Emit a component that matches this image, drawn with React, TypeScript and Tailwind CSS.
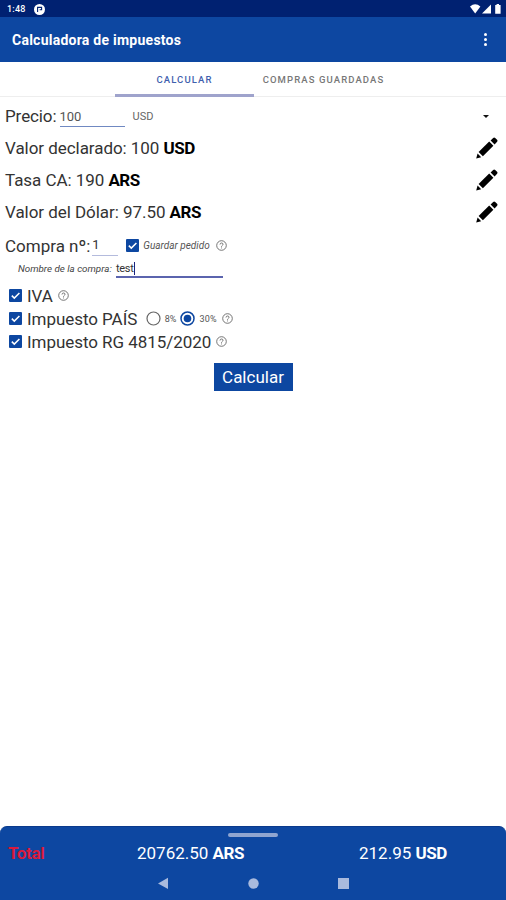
import type { ReactNode } from 'react';

const PencilIcon = () => (
  <svg className="w-[22px] h-[22px] shrink-0 mb-px" viewBox="0 0 22 22" fill="#000">
    <path d="M0.2 21.6 L1.6 16.6 L5.2 20.2 Z" />
    <path d="M2.6 15 L13.2 4.6 L17.4 8.8 L6.9 19.3 Z" />
    <path d="M14.6 3.4 L17.2 0.9 Q18.2 0 19.2 0.9 L21.1 2.8 Q22 3.8 21.1 4.8 L18.6 7.4 Z" />
  </svg>
);

const HelpIcon = ({ className = '' }: { className?: string }) => (
  <svg
    className={`w-[11px] h-[11px] shrink-0 ${className}`}
    viewBox="0 0 11 11"
    fill="none"
    stroke="#666"
    strokeWidth="0.9"
  >
    <circle cx="5.5" cy="5.5" r="4.8" />
    <path d="M4 4.5 Q4.1 3 5.5 3 Q7 3 7 4.3 Q7 5 6.2 5.5 Q5.5 5.9 5.5 6.7 M5.5 7.5 V8.4" />
  </svg>
);

const CheckIcon = () => (
  <svg className="w-[13px] h-[13px] shrink-0" viewBox="0 0 13 13">
    <rect width="13" height="13" rx="1" fill="#0d47a1" />
    <path d="M2.8 6.6 L5.3 9.1 L10.4 4" fill="none" stroke="#fff" strokeWidth="1.5" />
  </svg>
);

const Radio = ({ checked = false }: { checked?: boolean }) => (
  <svg className="w-[15px] h-[15px] shrink-0" viewBox="0 0 15 15">
    <circle
      cx="7.5"
      cy="7.5"
      r="6.5"
      fill="none"
      stroke={checked ? '#0d47a1' : '#666'}
      strokeWidth={checked ? 1.5 : 1.2}
    />
    {checked && <circle cx="7.5" cy="7.5" r="3.8" fill="#0d47a1" />}
  </svg>
);

const ValueRow = ({ label, value, unit }: { label: string; value: string; unit: string }) => (
  <div className="flex items-center justify-between h-8 pl-[5px] pr-2">
    <p className="tracking-[-0.05px]">
      {label} {value} <b className="font-bold text-black tracking-[-0.5px]">{unit}</b>
    </p>
    <PencilIcon />
  </div>
);

const TaxRow = ({ label, children }: { label: string; children?: ReactNode }) => (
  <div className="flex items-center h-[23px] pl-[9px]">
    <CheckIcon />
    <span className="ml-[5px] pt-px tracking-[-0.05px]">{label}</span>
    {children}
  </div>
);

const App = () => {
  return (
    <div
      className="flex flex-col w-[506px] h-[900px] bg-white text-[17px] leading-none text-[#333] whitespace-nowrap overflow-hidden"
      style={{ fontFamily: 'Roboto, sans-serif' }}
    >
      {/* Status bar */}
      <div className="flex items-center h-[17px] pt-px pl-[7px] pr-[4px] bg-[#002171] text-white">
        <span className="text-[9px] font-medium tracking-[0.2px]">1:48</span>
        <svg className="w-[11px] h-[11px] ml-[8px]" viewBox="0 0 11 11">
          <circle cx="5.5" cy="5.5" r="5.5" fill="#fff" />
          <path d="M3.6 8 V3.4 H7.6 V5.8 H5.6" fill="none" stroke="#002171" strokeWidth="1.1" />
        </svg>
        <svg className="w-[32px] h-[10px] ml-auto" viewBox="0 0 32 10" fill="#fff">
          <path d="M0 2.5 Q5.2 -2 10.4 2.5 L5.2 9.5 Z" />
          <path d="M12 9.5 L21 0.5 V9.5 Z" />
          <path d="M25.2 1 H26.6 V0 H29 V1 H30.6 V9.7 H25.2 Z" />
        </svg>
      </div>

      {/* App bar */}
      <header className="flex items-center justify-between h-[45px] pl-3 pr-[19px] bg-[#0d47a1] text-white">
        <h1 className="pt-px text-[14px] font-bold tracking-[0.25px]">Calculadora de impuestos</h1>
        <div className="flex flex-col gap-[2px]">
          <i className="w-[3px] h-[3px] bg-white rounded-full" />
          <i className="w-[3px] h-[3px] bg-white rounded-full" />
          <i className="w-[3px] h-[3px] bg-white rounded-full" />
        </div>
      </header>

      {/* Tabs */}
      <nav className="flex h-[35px] pl-[115px] border-b border-[#eee] text-[9.5px] font-medium tracking-[1.1px]">
        <div className="flex items-center justify-center w-[139px] h-[35px] pt-[4px] border-b-[3px] border-[#9fa3cc] text-[#3f5fae]">
          CALCULAR
        </div>
        <div className="flex items-center justify-center w-[139px] h-[35px] pt-px text-[#777]">COMPRAS GUARDADAS</div>
      </nav>

      <main className="flex-1">
        <div className="flex items-center h-[35px] pt-[3px] pl-[5px] pr-[17px]">
          <span className="tracking-[-0.1px]">Precio:</span>
          <div className="w-[65px] h-[21px] ml-[3px] pt-[4px] border-b border-[#7089c2] text-[13px] text-[#555]">100</div>
          <span className="ml-[8px] text-[11px] text-[#666]">USD</span>
          <svg className="w-[6px] h-[3px] ml-auto" viewBox="0 0 6 3">
            <path d="M0 0 H6 L3 3 Z" fill="#111" />
          </svg>
        </div>

        <ValueRow label="Valor declarado:" value="100" unit="USD" />
        <ValueRow label="Tasa CA:" value="190" unit="ARS" />
        <ValueRow label="Valor del Dólar:" value="97.50" unit="ARS" />

        <div className="flex items-center h-[26px] mt-[4px] pl-[5px]">
          <span className="pt-[2px]">Compra nº:</span>
          <div className="w-[26px] h-[22px] ml-[2px] pt-[4px] border-b border-[#b4bbdd] text-[13px]">1</div>
          <div className="flex items-center ml-[8px]">
            <CheckIcon />
            <span className="ml-[4px] pt-px text-[10px] italic text-[#555]">Guardar pedido</span>
            <HelpIcon className="ml-[6px]" />
          </div>
        </div>

        <div className="flex items-center h-[21px] pl-[18px]">
          <span className="w-[98px] text-[9.8px] italic text-[#444]">Nombre de la compra:</span>
          <div className="flex items-center w-[107px] h-[19px] pt-px border-b-2 border-[#5b64ae] text-[11px]">
            <span className="tracking-[-0.3px]">test</span>
            <i className="w-px h-[13px] bg-[#1a237e]" />
          </div>
        </div>

        <div className="mt-[5px]">
          <TaxRow label="IVA">
            <HelpIcon className="ml-[5px]" />
          </TaxRow>
          <TaxRow label="Impuesto PAÍS">
            <div className="flex items-center ml-[8.5px] text-[9px] text-[#555]">
              <Radio />
              <span className="ml-[4px] pt-px">8%</span>
              <span className="flex ml-[4px]">
                <Radio checked />
              </span>
              <span className="ml-[4px] pt-px tracking-[0.2px]">30%</span>
              <HelpIcon className="ml-[5px]" />
            </div>
          </TaxRow>
          <TaxRow label="Impuesto RG 4815/2020">
            <HelpIcon className="ml-[5px]" />
          </TaxRow>
        </div>

        <button className="block w-[79px] h-[28px] mt-[10px] mx-auto bg-[#0d47a1] text-white">Calcular</button>
      </main>

      {/* Totals sheet */}
      <footer className="h-[74px] pt-[6px] bg-[#0d47a1] rounded-t-[7px] border-t border-[#0a3a8c] text-white">
        <div className="w-[50px] h-[4px] mx-auto rounded-full bg-[#8fa5d0]" />
        <div className="flex items-center h-[31px] pt-[2px] pl-[8px]">
          <span className="w-[129px] font-bold tracking-[-0.3px] text-[#d81b3c]">Total</span>
          <span className="w-[222px]">
            20762.50 <b className="font-bold tracking-[-0.4px]">ARS</b>
          </span>
          <span>
            212.95 <b className="font-bold tracking-[-0.4px]">USD</b>
          </span>
        </div>
        {/* System navigation */}
        <svg className="w-[192px] h-[12px] ml-[158px] mt-[9px]" viewBox="0 0 192 12" fill="#a9badd">
          <path d="M0 6.5 L10 0.8 V12 Z" />
          <circle cx="95.5" cy="6.5" r="5.2" />
          <rect x="180" y="1" width="11" height="11" />
        </svg>
      </footer>
    </div>
  );
};

export default App;
